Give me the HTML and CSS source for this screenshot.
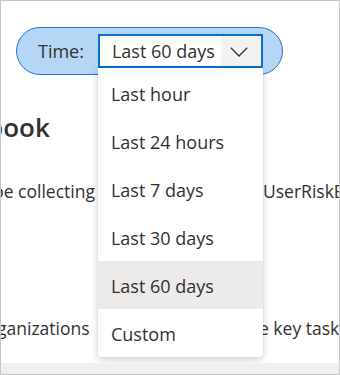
FILE: index.html
```html
<!DOCTYPE html>
<html lang="en">
<head>
    <meta charset="UTF-8">
    <meta name="viewport" content="width=device-width, initial-scale=1.0">
    <title>Workbook - Time range</title>
    <link rel="stylesheet" href="styles.css">
</head>
<body>

<div class="frame">
    <div class="page">
        <div class="toolbar">
            <div class="time-pill">
                <span class="time-label">Time:</span>
                <div class="combo">
                    <div class="combo-box">
                        <span class="combo-value">Last 60 days</span>
                        <span class="combo-caret">
                            <svg width="18" height="10" viewBox="0 0 18 10">
                                <path d="M0.8 0.8 L9 9 L17.2 0.8" fill="none" stroke="#323130" stroke-width="1.3"/>
                            </svg>
                        </span>
                    </div>
                    <ul class="combo-list">
                        <li>Last hour</li>
                        <li>Last 24 hours</li>
                        <li>Last 7 days</li>
                        <li>Last 30 days</li>
                        <li class="selected">Last 60 days</li>
                        <li>Custom</li>
                    </ul>
                </div>
            </div>
        </div>

        <h1 class="doc-title"><span>book</span></h1>

        <p class="doc-line first">
            <span class="left">be collecting</span>
            <span class="mid"></span>
            <span class="right">UserRiskEvents</span>
        </p>

        <p class="doc-line last">
            <span class="left">ganizations</span>
            <span class="mid"></span>
            <span class="right">e key tasks</span>
        </p>
    </div>
    <div class="footer-bar"></div>
</div>

</body>
</html>
```

FILE: styles.css
```css
body {
    margin: 0;
    padding: 0;
    font-family: 'Open Sans', 'Noto Sans', sans-serif;
    color: #323130;
    background-color: #fff;
    overflow: hidden;
}

.frame {
    width: 340px;
    height: 375px;
    box-sizing: border-box;
    border: 1px solid #c6c6c6;
    display: flex;
    flex-direction: column;
}

.page {
    flex: 1;
    position: relative;
    overflow: hidden;
    background-color: #fff;
}

.footer-bar {
    height: 11px;
    background-color: #f0f0f0;
}

/* time picker */
.toolbar {
    padding: 26px 0 0 15px;
    position: relative;
    z-index: 2;
}

.time-pill {
    display: inline-flex;
    align-items: center;
    gap: 14px;
    height: 48px;
    box-sizing: border-box;
    padding: 0 19px 0 21px;
    background-color: #b5d6f4;
    border: 1px solid #2274d4;
    border-radius: 24px;
}

.time-label {
    font-size: 18px;
    line-height: 30px;
}

.combo {
    position: relative;
    width: 165px;
}

.combo-box {
    display: flex;
    height: 34px;
    box-sizing: border-box;
    border: 2px solid #0a6fd0;
    background-color: #fff;
}

.combo-value {
    flex: 1;
    padding-left: 12px;
    font-size: 18px;
    line-height: 30px;
    white-space: nowrap;
}

.combo-caret {
    width: 40px;
    display: flex;
    align-items: center;
    justify-content: center;
    padding-right: 4px;
    box-sizing: border-box;
    background-color: #f3f2f1;
}

.combo-caret svg {
    display: block;
    margin-top: 1px;
}

.combo-list {
    position: absolute;
    top: 100%;
    left: 0;
    width: 165px;
    margin: 0;
    padding: 1px 0 0;
    list-style: none;
    background-color: #fff;
    border-radius: 0 0 4px 4px;
    box-shadow: 0 3px 9px rgba(0, 0, 0, 0.18), 0 0 2px rgba(0, 0, 0, 0.1);
}

.combo-list li {
    height: 48px;
    box-sizing: border-box;
    padding: 3px 0 0 13px;
    font-size: 18px;
    line-height: 44px;
    white-space: nowrap;
}

.combo-list li.selected {
    background-color: #edebe9;
}

/* document behind the picker */
.doc-title {
    margin: 34px 0 0;
    font-size: 26px;
    font-weight: 600;
    line-height: 36px;
    white-space: nowrap;
}

.doc-title span {
    display: inline-block;
    margin-left: -14px;
}

.doc-line {
    display: grid;
    grid-template-columns: 97px 165px 1fr;
    margin: 0;
    font-size: 17.5px;
    line-height: 24px;
    white-space: nowrap;
}

.doc-line.first {
    margin-top: 34px;
}

.doc-line.last {
    margin-top: 113px;
}

.doc-line .left {
    margin-left: -8px;
}

.doc-line.last .left {
    margin-left: -4px;
}

.doc-line .right {
    overflow: hidden;
}

.doc-line.last .right {
    margin-left: -4px;
}
```
